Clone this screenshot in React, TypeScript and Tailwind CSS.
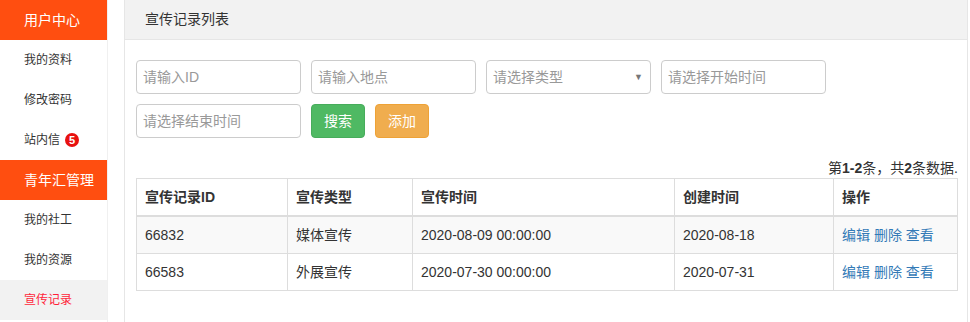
const font = { fontFamily: '"Liberation Sans", "Noto Sans CJK SC", sans-serif' }

type Row = { id: string; type: string; time: string; created: string }

const rows: Row[] = [
  { id: '66832', type: '媒体宣传', time: '2020-08-09 00:00:00', created: '2020-08-18' },
  { id: '66583', type: '外展宣传', time: '2020-07-30 00:00:00', created: '2020-07-31' },
]

function SideHeader({ label }: { label: string }) {
  return (
    <div className="h-10 bg-[#ff4e10] text-white text-[14px] flex items-center pl-6">{label}</div>
  )
}

function SideItem({ label, active, badge }: { label: string; active?: boolean; badge?: number }) {
  return (
    <div
      className={`h-10 flex items-center pl-6 text-[12px] ${
        active ? 'bg-[#f2f2f2] text-[#ff1f3a]' : 'bg-white text-[#333]'
      }`}
    >
      {label}
      {badge !== undefined && (
        <span className="ml-[5px] w-[14px] h-[14px] rounded-full bg-[#e8110f] text-white text-[11px] font-bold flex items-center justify-center leading-none">
          {badge}
        </span>
      )}
    </div>
  )
}

function Field({ placeholder, select }: { placeholder: string; select?: boolean }) {
  return (
    <div className="relative w-[165px] h-[34px] border border-[#ccc] rounded-[4px] bg-white flex items-center pl-[6px] text-[14px] text-[#999]">
      {placeholder}
      {select && <span className="absolute right-[7px] top-[10px] text-[9px] text-[#777]">▼</span>}
    </div>
  )
}

export default function App() {
  return (
    <div className="w-[970px] h-[322px] bg-white flex overflow-hidden" style={font}>
      <aside className="w-[108px] shrink-0 border-r border-[#f0f0f0]">
        <SideHeader label="用户中心" />
        <SideItem label="我的资料" />
        <SideItem label="修改密码" />
        <SideItem label="站内信" badge={5} />
        <SideHeader label="青年汇管理" />
        <SideItem label="我的社工" />
        <SideItem label="我的资源" />
        <SideItem label="宣传记录" active />
      </aside>

      <main className="ml-[16px] w-[844px] border-l border-r border-[#e6e6e6] h-full">
        <div className="h-10 bg-[#f2f2f2] border-b border-[#e6e6e6] flex items-center pl-5 text-[14px] text-[#333]">
          宣传记录列表
        </div>

        <div className="pl-[11px] pr-[10px] pt-5">
          <div className="flex flex-wrap gap-x-[10px] gap-y-[10px] w-[700px]">
            <Field placeholder="请输入ID" />
            <Field placeholder="请输入地点" />
            <Field placeholder="请选择类型" select />
            <Field placeholder="请选择开始时间" />
            <Field placeholder="请选择结束时间" />
            <button className="w-[54px] h-[34px] rounded-[4px] bg-[#4fb963] text-white text-[14px] border border-[#47ac5b]">
              搜索
            </button>
            <button className="w-[54px] h-[34px] rounded-[4px] bg-[#f0ad4e] text-white text-[14px] border border-[#eea236]">
              添加
            </button>
          </div>

          <div className="mt-[20px] text-right text-[14px] text-[#333] leading-[20px] w-[822px]">
            第<b>1-2</b>条，共<b>2</b>条数据.
          </div>

          <table className="w-[822px] border-collapse text-[14px] text-[#333] leading-[20px]">
            <thead>
              <tr>
                <th className="w-[151px] text-left font-bold border border-[#ddd] border-b-2 px-2 py-2">宣传记录ID</th>
                <th className="w-[125px] text-left font-bold border border-[#ddd] border-b-2 px-2 py-2">宣传类型</th>
                <th className="w-[262px] text-left font-bold border border-[#ddd] border-b-2 px-2 py-2">宣传时间</th>
                <th className="w-[159px] text-left font-bold border border-[#ddd] border-b-2 px-2 py-2">创建时间</th>
                <th className="text-left font-bold border border-[#ddd] border-b-2 px-2 py-2">操作</th>
              </tr>
            </thead>
            <tbody>
              {rows.map((r, i) => (
                <tr key={r.id} className={i === 0 ? 'bg-[#f9f9f9]' : 'bg-white'}>
                  <td className="border border-[#ddd] px-2 py-2">{r.id}</td>
                  <td className="border border-[#ddd] px-2 py-2">{r.type}</td>
                  <td className="border border-[#ddd] px-2 py-2">{r.time}</td>
                  <td className="border border-[#ddd] px-2 py-2">{r.created}</td>
                  <td className="border border-[#ddd] px-2 py-2 text-[#337ab7]">
                    <span>编辑</span> <span>删除</span> <span>查看</span>
                  </td>
                </tr>
              ))}
            </tbody>
          </table>
        </div>
      </main>
    </div>
  )
}
